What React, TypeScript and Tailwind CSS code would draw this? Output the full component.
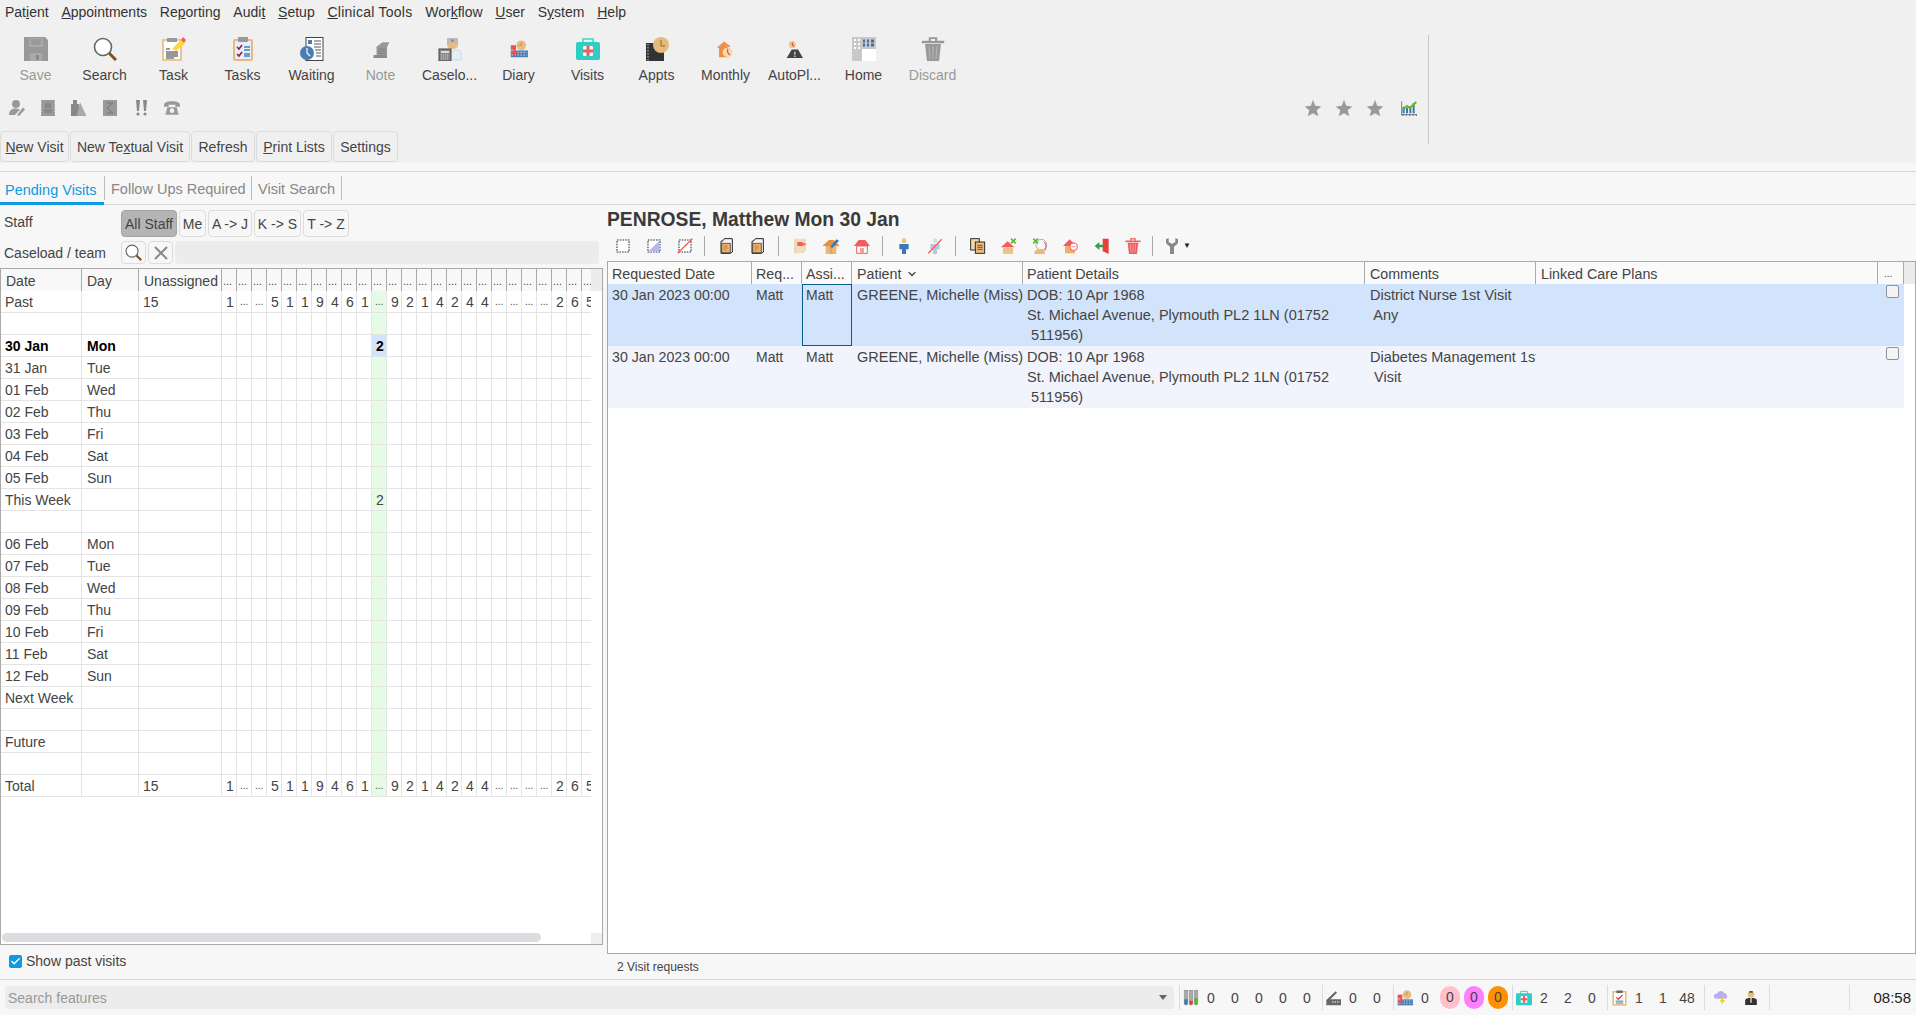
import { ReactNode } from "react";
import { Check, ChevronDown } from "lucide-react";

// grey used by the disabled toolbar glyphs
const G = "#999";

const Ic = ({ s = 24, w, vb = 24, children }: { s?: number; w?: number; vb?: number; children: ReactNode }) => (
  <svg width={w ?? s} height={s} viewBox={`0 0 ${vb} ${vb}`} className="block shrink-0">
    {children}
  </svg>
);

// big toolbar icons
const SaveIcon = () => (
  <Ic>
    <path d="M0 0H21L24 3V24H0Z" fill={G} />
    <path d="M5 1H19V10H5Z" fill="#aaa" />
    <path d="M7 3H17M7 5H17M7 7H17" stroke="#8a8a8a" />
    <path d="M6 16H18V24H6Z" fill="#aaa" />
    <path d="M12 18H15V23H12Z" fill="#8a8a8a" />
  </Ic>
);
const SearchIcon = ({ s = 24 }: { s?: number }) => (
  <Ic s={s}>
    <path d="M15.5 15.5L23 23" stroke="#7a5223" strokeWidth="3" />
    <circle cx="10" cy="10" r="8.5" fill="#fff" stroke="#666" strokeWidth="1.6" />
  </Ic>
);
const TaskIcon = () => (
  <Ic>
    <rect x="1" y="3" width="18" height="20" fill="#fff" stroke="#e6b97f" strokeWidth="1.6" />
    <rect x="5" y="1" width="10" height="4" fill={G} />
    <path d="M4 12H8M4 15H16M4 17H16M4 19H16M4 21H12" stroke="#333" strokeWidth="1.2" />
    <path d="M10 12L19 3L23 7L14 14Z" fill="#ffd83a" />
    <path d="M19 3L21 0L24 3L22 6Z" fill="#f25c5c" />
  </Ic>
);
const TasksIcon = () => (
  <Ic>
    <rect x="3" y="3" width="18" height="20" rx="1" fill="#e4effa" stroke="#e6b97f" strokeWidth="2" />
    <rect x="7" y="0" width="10" height="5" rx="1" fill={G} />
    <path d="M6 10L8 12L11 8M6 17L8 19L11 15" stroke="#a01545" strokeWidth="1.6" fill="none" />
    <path d="M13 10H19M13 13H19M13 17H19M13 19H19" stroke="#4a7db5" strokeWidth="1.3" />
  </Ic>
);
const WaitingIcon = () => (
  <Ic>
    <rect x="6" y="0.5" width="17" height="23" fill="#fff" stroke="#444" />
    <rect x="8" y="3" width="4" height="4" fill="#4a7db5" />
    <path d="M14 4H21M14 7H21M14 10H21M15 13H21M16 16H21M16 19H21" stroke="#555" />
    <circle cx="7" cy="16" r="7" fill="#4a7db5" />
    <path d="M7 11V16L10 19" stroke="#fff" strokeWidth="1.2" fill="none" />
  </Ic>
);
const NoteIcon = () => (
  <Ic s={18}>
    <path d="M6 9L14 3H23L20 10V21H6Z" fill={G} />
    <path d="M2 20H20V24H2Z" fill="#8a8a8a" />
    <path d="M8 12H18M8 15H18M8 18H18" stroke="#777" />
  </Ic>
);
const CaseloadIcon = () => (
  <Ic>
    <path d="M9 1H20V8C20 11 17 12 14.5 12C12 12 9 11 9 8Z" fill="#e9bd7e" />
    <rect x="9" y="1" width="11" height="5" fill="#bbb" />
    <circle cx="14.5" cy="3.5" r="1.2" fill="#f05050" />
    <path d="M12 23V17C14 14 17 12 20 13C23 14 24 18 24 21C24 23 22 23 20 23Z" fill="#e2eef8" stroke="#b8ccd8" strokeWidth="0.6" />
    <rect x="1" y="12" width="12" height="12" fill="#888" stroke="#444" />
    <rect x="3" y="14" width="8" height="2" fill="#ddd" />
    <path d="M3 18H11M3 20H11M3 22H11" stroke="#ccc" strokeDasharray="1 1" />
  </Ic>
);
const DiaryIcon = ({ s = 18 }: { s?: number }) => (
  <Ic s={s}>
    <circle cx="15" cy="7" r="6.5" fill="#e9bd7e" />
    <path d="M15 3V7H12" stroke="#b9803a" fill="none" />
    <rect x="1" y="7" width="7" height="6" fill="#f05050" />
    <rect x="1" y="14" width="23" height="9" fill="#4a7db5" />
    <path d="M2 16.5H23M2 20H23" stroke="#fff" strokeDasharray="2 2" />
    <path d="M6 12V22M2 17H10" stroke="#f05050" strokeWidth="2.6" />
  </Ic>
);
const VisitsIcon = ({ s = 24 }: { s?: number }) => (
  <Ic s={s}>
    <path d="M7 6V2H17V6" stroke="#3dd2ca" strokeWidth="1.5" fill="none" />
    <rect x="0" y="5" width="24" height="18" rx="2" fill="#2fcdc4" />
    <rect x="7" y="9" width="10" height="10" fill="#e8fbfa" rx="1" />
    <path d="M12 9V19M7 14H17" stroke="#f25c5c" strokeWidth="3" />
  </Ic>
);
const ApptsIcon = () => (
  <Ic>
    <rect x="1" y="6" width="18" height="18" fill="#333" />
    <path d="M3 7V24" stroke="#999" strokeWidth="1.5" strokeDasharray="1.5 1.5" />
    <circle cx="16" cy="8" r="8" fill="#e6ba7b" />
    <path d="M16 3V9H20" stroke="#8d6a35" fill="none" />
  </Ic>
);
const MonthlyIcon = () => (
  <Ic s={17}>
    <path d="M3 23V9L10 3L16 8V23Z" fill="#ef8b42" />
    <path d="M1 10L10 2L18 8" stroke="#ef8b42" strokeWidth="2" fill="none" />
    <circle cx="15" cy="16" r="7" fill="#f9d9a8" />
    <path d="M15 11V16L18 20" stroke="#e04040" strokeWidth="1.5" fill="none" />
  </Ic>
);
const AutoPlIcon = () => (
  <Ic s={17}>
    <circle cx="9" cy="5" r="5" fill="#f3c38a" />
    <path d="M9 2V5L11 8" stroke="#e04040" strokeWidth="1.5" fill="none" />
    <path d="M8 12H17L24 24H1Z" fill="#444" />
    <path d="M12.5 15V19M12.5 20.5V22.5" stroke="#fff" strokeWidth="1.5" />
  </Ic>
);
const HomeIcon = () => (
  <Ic>
    <rect x="0" y="0" width="24" height="24" fill="#c8c8c8" />
    <rect x="10" y="12" width="14" height="12" fill="#fff" />
    <path d="M2 3H4M6 3H8M2 7H4M6 7H8M2 11H4M6 11H8" stroke="#fff" strokeWidth="2" />
    <path d="M11 4H13M15 4H17M19 4H22M11 8H13M15 8H17M19 8H22" stroke="#3d6fa5" strokeWidth="3" />
  </Ic>
);
const TrashIcon = ({ s = 24, c = G, line = "#b5b5b5" }: { s?: number; c?: string; line?: string }) => (
  <Ic s={s}>
    <path d="M1 4H23V6H1ZM8 4V0.5H16V4" fill={c} stroke={c} strokeWidth="0.5" />
    <path d="M10 2H14V4H10Z" fill="#f0f0f0" />
    <path d="M4 7H20L18 24H6Z" fill={c} />
    <path d="M8 9L9 22M12 9V22M16 9L15 22" stroke={line} />
  </Ic>
);

// small grey row under the toolbar
const PersonPen = () => (
  <Ic s={16} vb={16}>
    <circle cx="7" cy="4" r="4" fill={G} />
    <path d="M0 15C0 10 3 8.5 7 8.5L11 9.5L6 15Z" fill={G} />
    <path d="M8 15L14 7.5L16 9.5L10 16Z" fill={G} />
  </Ic>
);
const StampIcon = () => (
  <Ic s={16} vb={16}>
    <rect x="1" y="0" width="14" height="16" fill={G} />
    <path d="M1 1V15M15 1V15" stroke="#f0f0f0" strokeDasharray="1 1" />
    <rect x="5" y="3" width="6" height="5" fill="#888" />
    <rect x="4" y="9" width="8" height="4" fill="#888" />
  </Ic>
);
const TriIcon = () => (
  <Ic s={16} vb={16}>
    <rect x="0" y="4" width="8" height="12" fill="#888" />
    <rect x="2" y="0" width="4" height="4" fill="#888" />
    <path d="M9 2L15.5 16H6Z" fill="#aaa" />
  </Ic>
);
const ScrollIcon = () => (
  <Ic s={16} vb={16}>
    <rect x="1" y="0" width="14" height="16" fill={G} />
    <path d="M5 3H11L5 8L11 13H5" stroke="#777" fill="none" />
  </Ic>
);
const WarnIcon = () => (
  <Ic s={16} vb={16}>
    <path d="M3 0H7L6 11H4ZM10 0H14L13 11H11Z" fill="#888" />
    <circle cx="5" cy="14" r="1.6" fill="#888" />
    <circle cx="12" cy="14" r="1.6" fill="#888" />
  </Ic>
);
const PhoneIcon = () => (
  <Ic s={16}>
    <path d="M0 8C0 4 4 2 12 2C20 2 24 4 24 8V10H17V7H7V10H0Z" fill={G} />
    <path d="M5 11H19L22 22H2Z" fill={G} />
    <circle cx="12" cy="16" r="3.5" fill="#f0f0f0" />
  </Ic>
);
const StarIcon = () => (
  <Ic s={18}>
    <polygon points="12,1 15,9 23,10 17,15 19,23 12,19 5,23 7,15 1,10 9,9" fill={G} />
  </Ic>
);
const ChartIcon = () => (
  <Ic s={16}>
    <path d="M4 10V20M9 12V20M14 9V20M19 5V20" stroke="#3d78b5" strokeWidth="3" />
    <path d="M1 2V23M1 22H24M3 24V21M8 24V21M13 24V21M18 24V21M23 24V21" stroke="#444" />
    <path d="M2 15L9 9L13 12L23 3" stroke="#63b52d" strokeWidth="3" fill="none" />
  </Ic>
);

// second toolbar (visit panel) icons
const Dash = ({ fill, slash }: { fill?: boolean; slash?: boolean }) => (
  <Ic s={16}>
    <rect x="3" y="3" width="18" height="18" fill="#fff" stroke="#334" strokeWidth="1.6" strokeDasharray="2.4 1.6" />
    {fill && <path d="M20 4V20H4Z" fill="#b3b8f0" />}
    {slash && <path d="M1 23L23 1" stroke="#f25c5c" strokeWidth="2" />}
  </Ic>
);
const BagIcon = () => (
  <Ic s={16}>
    <path d="M6 4L8 1H20V21L17 23H3V5Z" fill="#f5f5f5" stroke="#222" strokeWidth="1.5" />
    <path d="M4 8H17V22H4Z" fill="#eeb06a" stroke="#222" strokeWidth="1" />
    <path d="M7 12H13M7 15H13M7 18H11" stroke="#b87425" strokeWidth="1.2" />
  </Ic>
);
const PageIcon = () => (
  <Ic s={16}>
    <path d="M3 1H21V19L17 23H3Z" fill="#f0dcbe" />
    <path d="M5 3V22M19 3V16" stroke="#d8c29c" strokeDasharray="1.5 1.5" />
    <path d="M8 6H16V12H8Z" fill="#f25c5c" />
    <path d="M16 7L22 9L16 12Z" fill="#f25c5c" />
  </Ic>
);
const HousePen = () => (
  <Ic s={16}>
    <path d="M0 11L9 3H16L24 11V12H0Z" fill="#e79040" />
    <path d="M4 12H20V24H4Z" fill="#eeb474" />
    <path d="M12 12V24" stroke="#d08030" />
    <path d="M11 13L20 2L24 4L14 15Z" fill="#3d78b5" />
  </Ic>
);
const HouseRed = ({ c = "#fff" }: { c?: string }) => (
  <Ic s={16}>
    <path d="M0 12L7 3H17L24 12Z" fill="#f25c5c" />
    <rect x="4" y="12" width="16" height="11" fill={c} stroke="#f25c5c" strokeWidth="1.5" />
    <rect x="9" y="15" width="6" height="8" fill="#f0a0a0" />
  </Ic>
);
const Nurse = () => (
  <Ic s={16}>
    <circle cx="12" cy="4" r="3.5" fill="#e9bd7e" />
    <path d="M5 9H19V17H15V24H9V17H5Z" fill="#3d78b5" />
  </Ic>
);
const NurseOff = () => (
  <Ic s={16}>
    <circle cx="12" cy="4" r="3.5" fill="#ddd" />
    <path d="M5 9H19V17H15V24H9V17H5Z" fill="#b8c8dc" />
    <path d="M2 23L22 2" stroke="#f25c5c" strokeWidth="2" />
  </Ic>
);
const CopyIcon = () => (
  <Ic s={16}>
    <rect x="1" y="1" width="13" height="17" fill="#f0d6a8" stroke="#222" strokeWidth="1.4" />
    <rect x="8" y="6" width="14" height="17" fill="#eeb878" stroke="#222" strokeWidth="1.4" />
    <path d="M11 11H19M11 14H19M11 17H19" stroke="#222" />
  </Ic>
);
const HouseX = () => (
  <Ic s={16}>
    <path d="M0 14L10 5L20 14Z" fill="#f25c5c" />
    <rect x="3" y="14" width="15" height="10" fill="#f0c088" />
    <path d="M15 1L22 8M22 1L15 8" stroke="#5fb52d" strokeWidth="2.4" />
  </Ic>
);
const PersonX = () => (
  <Ic s={16}>
    <circle cx="14" cy="10" r="8" fill="#f8f8f8" stroke="#888" />
    <path d="M3 24C4 16 10 16 16 17L20 24Z" fill="#eeb874" />
    <path d="M2 1L9 8M9 1L2 8" stroke="#5fb52d" strokeWidth="2.4" />
    <path d="M18 6C22 10 22 16 18 20" stroke="#e05050" fill="none" strokeWidth="1.5" />
  </Ic>
);
const HouseClock = () => (
  <Ic s={16}>
    <path d="M0 12L10 2L20 12Z" fill="#f25c5c" />
    <rect x="3" y="12" width="15" height="11" fill="#f0b070" />
    <circle cx="16" cy="13" r="5.5" fill="#fff" stroke="#f25c5c" strokeWidth="1.6" />
    <path d="M13 13H19" stroke="#f25c5c" />
  </Ic>
);
const ExitIcon = () => (
  <Ic s={16}>
    <path d="M13 1H22V24L13 20Z" fill="#e8403f" />
    <path d="M1 12L8 6V10H14V14H8V18Z" fill="#35a04a" />
  </Ic>
);
const WrenchIcon = () => (
  <Ic s={16}>
    <path d="M3 2V8L9 13V24H15V13L21 8V2L17 0V6L12 9L7 6V0Z" fill="#888" />
  </Ic>
);

// status bar icons
const TubesIcon = () => (
  <Ic s={16}>
    <path d="M2 0H7V20A2.5 2.5 0 0 1 2 20Z" fill="#aaa" stroke="#555" strokeWidth="0.5" />
    <path d="M2 14H7V20A2.5 2.5 0 0 1 2 20Z" fill="#3d78b5" />
    <path d="M9.5 0H14.5V20A2.5 2.5 0 0 1 9.5 20Z" fill="#aaa" stroke="#555" strokeWidth="0.5" />
    <path d="M9.5 16H14.5V20A2.5 2.5 0 0 1 9.5 20Z" fill="#e8403f" />
    <path d="M17 0H22V20A2.5 2.5 0 0 1 17 20Z" fill="#aaa" stroke="#555" strokeWidth="0.5" />
    <path d="M17 12H22V20A2.5 2.5 0 0 1 17 20Z" fill="#5fb52d" />
  </Ic>
);
const FaxIcon = () => (
  <Ic s={16}>
    <path d="M2 15L16 2L18 4L8 14H24V23H2Z" fill="#666" />
    <path d="M11 18H22" stroke="#fff" strokeDasharray="2 1.5" strokeWidth="1.5" />
  </Ic>
);
const ClipIcon = () => (
  <Ic s={16} w={15}>
    <rect x="2" y="2" width="20" height="21" fill="#fff" stroke="#e6b97f" strokeWidth="2.4" />
    <rect x="7" y="0" width="10" height="4" fill="#666" />
    <path d="M7 11L10 14L17 7" stroke="#e03030" strokeWidth="2" fill="none" />
    <path d="M6 17H18M6 20H18" stroke="#3d5f88" strokeWidth="1.4" />
  </Ic>
);
const WeatherIcon = () => (
  <Ic s={16} w={15}>
    <path d="M3 13A4 4 0 0 1 5 5A6 6 0 0 1 16 4A5 5 0 0 1 19 13Z" fill="#b7aef0" />
    <path d="M14 10L9 18H13L11 24L18 15H14L16 10Z" fill="#f0d020" />
  </Ic>
);
const UserIcon = () => (
  <Ic s={16} w={14}>
    <circle cx="12" cy="6" r="5.5" fill="#e9bd7e" />
    <path d="M9 0H15V3H9Z" fill="#555" />
    <path d="M2 24V16C2 13 6 12 12 12C18 12 22 13 22 16V24Z" fill="#333" />
    <path d="M11 12H13V20H11Z" fill="#fff" />
  </Ic>
);

const topTools: [string, ReactNode, boolean?][] = [
  ["Save", <SaveIcon />, true],
  ["Search", <SearchIcon />],
  ["Task", <TaskIcon />],
  ["Tasks", <TasksIcon />],
  ["Waiting", <WaitingIcon />],
  ["Note", <NoteIcon />, true],
  ["Caselo...", <CaseloadIcon />],
  ["Diary", <DiaryIcon />],
  ["Visits", <VisitsIcon />],
  ["Appts", <ApptsIcon />],
  ["Monthly", <MonthlyIcon />],
  ["AutoPl...", <AutoPlIcon />],
  ["Home", <HomeIcon />],
  ["Discard", <TrashIcon />, true],
];

const counts = ["1", "...", "...", "5", "1", "1", "9", "4", "6", "1", "...", "9", "2", "1", "4", "2", "4", "4", "...", "...", "...", "...", "2", "6", "5"];
const colIdx = counts.map((_, i) => i);
const TODAY_COL = 10;

type Row = { date?: string; day?: string; un?: string; nums?: string[]; bold?: boolean; mark?: string };
const rows: Row[] = [
  { date: "Past", un: "15", nums: counts },
  {},
  { date: "30 Jan", day: "Mon", bold: true, mark: "2" },
  { date: "31 Jan", day: "Tue" },
  { date: "01 Feb", day: "Wed" },
  { date: "02 Feb", day: "Thu" },
  { date: "03 Feb", day: "Fri" },
  { date: "04 Feb", day: "Sat" },
  { date: "05 Feb", day: "Sun" },
  { date: "This Week", mark: "2" },
  {},
  { date: "06 Feb", day: "Mon" },
  { date: "07 Feb", day: "Tue" },
  { date: "08 Feb", day: "Wed" },
  { date: "09 Feb", day: "Thu" },
  { date: "10 Feb", day: "Fri" },
  { date: "11 Feb", day: "Sat" },
  { date: "12 Feb", day: "Sun" },
  { date: "Next Week" },
  {},
  { date: "Future" },
  {},
  { date: "Total", un: "15", nums: counts },
];

const visitCols = [
  { title: "Requested Date", w: "w-[144px]", pl: "pl-[4px]" },
  { title: "Req...", w: "w-[50px]", pl: "pl-[4px]" },
  { title: "Assi...", w: "w-[50px]", pl: "pl-[4px]" },
  { title: "Patient", w: "w-[171px]", pl: "pl-[5px]" },
  { title: "Patient Details", w: "w-[342px]", pl: "pl-[4px]" },
  { title: "Comments", w: "w-[171px]", pl: "pl-[5px]" },
  { title: "Linked Care Plans", w: "w-[342px]", pl: "pl-[5px]" },
];

const details = ["DOB: 10 Apr 1968", "St. Michael Avenue, Plymouth PL2 1LN (01752", " 511956)"];
const visits = [
  { bg: "bg-[#d2e4fc]", comments: ["District Nurse 1st Visit", " Any"], sel: true },
  { bg: "bg-[#f2f4fd]", comments: ["Diabetes Management 1st", " Visit"], sel: false },
];

function Btn({ w, children, active }: { w: string; children: ReactNode; active?: boolean }) {
  return (
    <div
      className={`${w} h-full flex items-center justify-center rounded-[4px] border whitespace-nowrap ${
        active ? "bg-[#b4b4b4] border-[#a4a4a4]" : "border-[#dcdcdc]"
      }`}
    >
      {children}
    </div>
  );
}

function Cell({ w, children, className = "" }: { w: string; children?: ReactNode; className?: string }) {
  return <div className={`${w} shrink-0 h-full border-r overflow-hidden whitespace-nowrap ${className}`}>{children}</div>;
}

function Num({ children }: { children?: ReactNode }) {
  return <div className="w-[24px] text-center">{children}</div>;
}

function ToolCell({ children, className = "" }: { children: ReactNode; className?: string }) {
  return <div className={`w-[31px] flex justify-center ${className}`}>{children}</div>;
}

const ToolSep = ({ className = "" }: { className?: string }) => <div className={`w-px h-[20px] bg-[#aaa] ${className}`} />;

export default function App() {
  return (
    <div className="w-[1916px] h-[1015px] flex flex-col overflow-hidden bg-[#f7f7f7] text-[14px] leading-[16px] text-[#444] font-['Liberation_Sans',Arial,sans-serif]">
      {/* menu + toolbars */}
      <div className="h-[163px] shrink-0 bg-[#f0f0f0]">
        <div className="h-[24px] flex items-center gap-[12.8px] pl-[5px] text-[#333]">
          <span>Pat<u>i</u>ent</span>
          <span><u>A</u>ppointments</span>
          <span>Re<u>p</u>orting</span>
          <span>Audi<u>t</u></span>
          <span><u>S</u>etup</span>
          <span className="tracking-[0.25px]"><u>C</u>linical Tools</span>
          <span>Wor<u>k</u>flow</span>
          <span><u>U</u>ser</span>
          <span>S<u>y</u>stem</span>
          <span><u>H</u>elp</span>
        </div>
        <div className="h-[107px] flex">
          <div className="w-[1428px] flex flex-col">
            <div className="flex pt-[13px] pl-[1px]">
              {topTools.map(([label, icon, off]) => (
                <div key={label} className="w-[69px] flex flex-col items-center">
                  <div className="h-[24px] flex items-center">{icon}</div>
                  <span className={`mt-[6px] ${off ? "text-[#999]" : ""}`}>{label}</span>
                </div>
              ))}
            </div>
            <div className="h-[22px] mt-[14px] flex items-center pl-[1px]">
              {[<PersonPen />, <StampIcon />, <TriIcon />, <ScrollIcon />, <WarnIcon />, <PhoneIcon />].map((ic, i) => (
                <ToolCell key={i}>{ic}</ToolCell>
              ))}
              <div className="ml-auto flex items-center pr-[1px]">
                <ToolCell><StarIcon /></ToolCell>
                <ToolCell><StarIcon /></ToolCell>
                <ToolCell><StarIcon /></ToolCell>
                <div className="w-[37px] flex justify-center"><ChartIcon /></div>
              </div>
            </div>
          </div>
          <div className="w-px h-[109px] mt-[11px] bg-[#c8c8c8]" />
        </div>
        <div className="h-[31px] flex gap-[1px]">
          <Btn w="w-[69px]"><span><u>N</u>ew Visit</span></Btn>
          <Btn w="w-[120px]"><span>New Te<u>x</u>tual Visit</span></Btn>
          <Btn w="w-[64px]">Refresh</Btn>
          <Btn w="w-[76px]"><span><u>P</u>rint Lists</span></Btn>
          <Btn w="w-[65px]">Settings</Btn>
        </div>
      </div>

      {/* tabs */}
      <div className="h-[42px] shrink-0 pt-[8px]">
        <div className="h-[34px] border-y border-[#d8d8d8] flex items-center text-[#888] text-[14.5px]">
          <div className="w-[104px] h-full pl-[5px] pt-[5px] flex items-center text-[#0f9ae0] border-b-[3px] border-[#0f9ae0] -mb-px">Pending Visits</div>
          <div className="w-[148px] h-[24px] pl-[6px] pt-[2px] flex items-center border-x border-[#bbb] whitespace-nowrap">Follow Ups Required</div>
          <div className="w-[90px] h-[24px] pl-[6px] pt-[2px] flex items-center border-r border-[#bbb] whitespace-nowrap">Visit Search</div>
        </div>
      </div>

      {/* body */}
      <div className="flex-1 flex min-h-0">
        {/* left: caseload grid */}
        <div className="w-[603px] shrink-0 flex flex-col pt-[5px]">
          <div className="h-[27px] flex items-center pl-[4px]">
            <span className="w-[117px] -mt-[3px]">Staff</span>
            <div className="h-full flex gap-[2px]">
              <Btn w="w-[56px]" active>All Staff</Btn>
              <Btn w="w-[27px]">Me</Btn>
              <Btn w="w-[44px]">{"A -> J"}</Btn>
              <Btn w="w-[47px]">{"K -> S"}</Btn>
              <Btn w="w-[46px]">{"T -> Z"}</Btn>
            </div>
          </div>
          <div className="h-[23px] mt-[4px] flex items-center pl-[4px] pr-[4px]">
            <span className="w-[117px]">Caseload / team</span>
            <div className="h-full flex gap-[2px] flex-1">
              <Btn w="w-[25px]"><SearchIcon s={17} /></Btn>
              <Btn w="w-[25px]">
                <svg width="14" height="14" viewBox="0 0 14 14"><path d="M1 1L13 13M13 1L1 13" stroke="#888" strokeWidth="2" /></svg>
              </Btn>
              <div className="flex-1 bg-[#ececec] rounded-[4px]" />
            </div>
          </div>
          <div className="h-[677px] mt-[4px] shrink-0 border border-[#a9a9a9] bg-white flex flex-col">
            <div className="h-[22px] flex shrink-0 bg-[#ececec]">
              <div className="w-[590px] flex overflow-hidden bg-[#f8f8f8] border-[#aaa]">
                <Cell w="w-[81px]" className="pl-[5px] leading-[24px] border-[#aaa]">Date</Cell>
                <Cell w="w-[57px]" className="pl-[5px] leading-[24px] border-[#aaa]">Day</Cell>
                <Cell w="w-[83px]" className="pl-[5px] leading-[24px] border-[#aaa]">Unassigned</Cell>
                {colIdx.map((i) => (
                  <Cell key={i} w="w-[15px]" className="pl-[1px] text-[11px] leading-[24px] border-[#aaa]">...</Cell>
                ))}
              </div>
            </div>
            {rows.map((r, ri) => (
              <div key={ri} className={`h-[22px] w-[590px] flex shrink-0 overflow-hidden border-b border-[#e4e4e4] leading-[22px] ${r.bold ? "font-bold text-black" : ""}`}>
                <Cell w="w-[81px]" className="pl-[4px] border-[#e4e4e4]">{r.date}</Cell>
                <Cell w="w-[57px]" className="pl-[5px] border-[#e4e4e4]">{r.day}</Cell>
                <Cell w="w-[83px]" className="pl-[4px] border-[#e4e4e4]">{r.un}</Cell>
                {colIdx.map((i) => {
                  const today = i === TODAY_COL;
                  const v = r.nums ? r.nums[i] : today ? r.mark : undefined;
                  const bg = today ? (r.bold ? "bg-[#d2e4fc]" : "bg-[#e6fbe6]") : "";
                  return (
                    <Cell key={i} w="w-[15px]" className={`border-[#e4e4e4] ${bg} ${v === "..." ? "pl-[3px] text-[10px]" : "pl-[4px]"}`}>
                      {v}
                    </Cell>
                  );
                })}
              </div>
            ))}
            <div className="mt-auto h-[11px] flex shrink-0">
              <div className="w-[590px] pl-[1px]">
                <div className="w-[539px] h-[9px] rounded-full bg-[#dcdde1]" />
              </div>
              <div className="flex-1 bg-[#eee]" />
            </div>
          </div>
          <div className="flex-1 flex items-center pl-[9px] pb-[2px] gap-[4px]">
            <div className="w-[13px] h-[13px] rounded-[2px] bg-[#0f9ae0] flex items-center justify-center">
              <Check size={11} color="#fff" strokeWidth={3} />
            </div>
            <span>Show past visits</span>
          </div>
        </div>

        {/* right: visit requests */}
        <div className="flex-1 min-w-0 ml-[4px] flex flex-col">
          <div className="h-[28px] shrink-0 flex items-center pt-[2px] text-[19.3px] font-bold text-[#3a3a3a]">
            PENROSE, Matthew Mon 30 Jan
          </div>
          <div className="h-[28px] shrink-0 flex items-center pb-[3px]">
            <ToolCell><Dash /></ToolCell>
            <ToolCell><Dash fill /></ToolCell>
            <ToolCell><Dash slash /></ToolCell>
            <ToolSep className="ml-[4px] mr-[6px]" />
            <ToolCell><BagIcon /></ToolCell>
            <ToolCell><BagIcon /></ToolCell>
            <ToolSep className="ml-[5px]" />
            <ToolCell className="ml-[5px]"><PageIcon /></ToolCell>
            <ToolCell><HousePen /></ToolCell>
            <ToolCell><HouseRed /></ToolCell>
            <ToolSep className="ml-[5px]" />
            <ToolCell className="ml-[5px]"><Nurse /></ToolCell>
            <ToolCell><NurseOff /></ToolCell>
            <ToolSep className="ml-[5px]" />
            <ToolCell className="ml-[6px]"><CopyIcon /></ToolCell>
            <ToolCell><HouseX /></ToolCell>
            <ToolCell><PersonX /></ToolCell>
            <ToolCell><HouseClock /></ToolCell>
            <ToolCell><ExitIcon /></ToolCell>
            <ToolCell><TrashIcon s={16} c="#f06060" line="#f8b0b0" /></ToolCell>
            <ToolSep className="ml-[4px]" />
            <div className="ml-[11px]"><WrenchIcon /></div>
            <div className="ml-[3px] text-[8px] leading-[8px] text-[#222]">▼</div>
          </div>
          <div className="h-[693px] shrink-0 border border-[#a9a9a9] bg-white flex flex-col">
            <div className="h-[22px] flex shrink-0 bg-[#ececec] text-[14.25px]">
              <div className="w-[1296px] flex bg-[#fafafa]">
                {visitCols.map((c) => (
                  <Cell key={c.title} w={c.w} className={`${c.pl} pt-[2px] border-[#aaa] flex items-center gap-[5px]`}>
                    {c.title}
                    {c.title === "Patient" && <ChevronDown size={12} strokeWidth={2.5} />}
                  </Cell>
                ))}
                <Cell w="w-[26px]" className="pl-[6px] text-[10px] leading-[24px] border-[#aaa]">...</Cell>
              </div>
            </div>
            {visits.map((v, vi) => (
              <div key={vi} className={`h-[62px] w-[1296px] flex shrink-0 leading-[20px] whitespace-pre ${v.bg}`}>
                <div className="w-[144px] pl-[4px] pt-[1px] text-[14.2px]">30 Jan 2023 00:00</div>
                <div className="w-[50px] pl-[4px] pt-[1px]">Matt</div>
                <div className={v.sel ? "w-[50px] pl-[3px] border border-[#0b5a8e]" : "w-[50px] pl-[4px] pt-[1px]"}>Matt</div>
                <div className="w-[171px] pl-[5px] pt-[1px] overflow-hidden text-[14.5px]">GREENE, Michelle (Miss)</div>
                <div className="w-[342px] pl-[4px] pt-[1px] overflow-hidden text-[14.5px]">
                  {details.map((d) => <div key={d}>{d}</div>)}
                </div>
                <div className="w-[171px] pl-[5px] pt-[1px] overflow-hidden text-[14.5px]">
                  {v.comments.map((d) => <div key={d}>{d}</div>)}
                </div>
                <div className="w-[342px]" />
                <div className="w-[26px] pl-[8px] pt-[1px]">
                  <div className="w-[13px] h-[13px] rounded-[2px] border border-[#8f9299] bg-[#f4f4f4]" />
                </div>
              </div>
            ))}
          </div>
          <div className="flex-1 flex items-center pl-[10px] text-[12px]">2 Visit requests</div>
        </div>
      </div>

      {/* status bar */}
      <div className="h-[36px] shrink-0 border-t border-[#d8d8d8] flex items-center">
        <div className="w-[1169px] h-[23px] ml-[5px] mr-[5px] shrink-0 bg-[#ececec] rounded-[4px] flex items-center justify-between pl-[3px] pr-[7px] text-[#999]">
          Search features
          <svg width="8" height="5" viewBox="0 0 10 6"><path d="M0 0H10L5 6Z" fill="#666" /></svg>
        </div>
        <div className="h-[25px] w-[143px] shrink-0 flex items-center border-l border-[#ddd] pl-[3px]">
          <TubesIcon />
          <Num>0</Num><Num>0</Num><Num>0</Num><Num>0</Num><Num>0</Num>
        </div>
        <div className="h-[25px] w-[71px] shrink-0 flex items-center border-l border-[#ddd] pl-[2px]">
          <FaxIcon />
          <Num>0</Num><Num>0</Num>
        </div>
        <div className="h-[25px] w-[119px] shrink-0 flex items-center border-l border-[#ddd] pl-[3px]">
          <DiaryIcon s={16} />
          <Num>0</Num>
          <div className="ml-[3px] w-[20px] h-[23px] rounded-full bg-[#ffc0cb] text-center leading-[23px]">0</div>
          <div className="ml-[4px] w-[20px] h-[23px] rounded-full bg-[#ff80ff] text-center leading-[23px]">0</div>
          <div className="ml-[4px] w-[20px] h-[23px] rounded-full bg-[#ff9000] text-center leading-[23px]">0</div>
        </div>
        <div className="h-[25px] w-[95px] shrink-0 flex items-center border-l border-[#ddd] pl-[3px]">
          <VisitsIcon s={16} />
          <Num>2</Num><Num>2</Num><Num>0</Num>
        </div>
        <div className="h-[25px] w-[97px] shrink-0 flex items-center border-l border-[#ddd] pl-[4px]">
          <ClipIcon />
          <Num>1</Num><Num>1</Num><Num>48</Num>
        </div>
        <div className="h-[25px] w-[65px] shrink-0 flex items-center border-l border-[#ddd] pl-[9px] gap-[15px]">
          <WeatherIcon />
          <UserIcon />
        </div>
        <div className="h-[25px] w-[80px] shrink-0 border-l border-[#ddd]" />
        <div className="h-[25px] flex-1 flex items-center justify-end border-l border-[#ddd] pr-[5px] text-[15px] text-[#222]">08:58</div>
      </div>
    </div>
  );
}
